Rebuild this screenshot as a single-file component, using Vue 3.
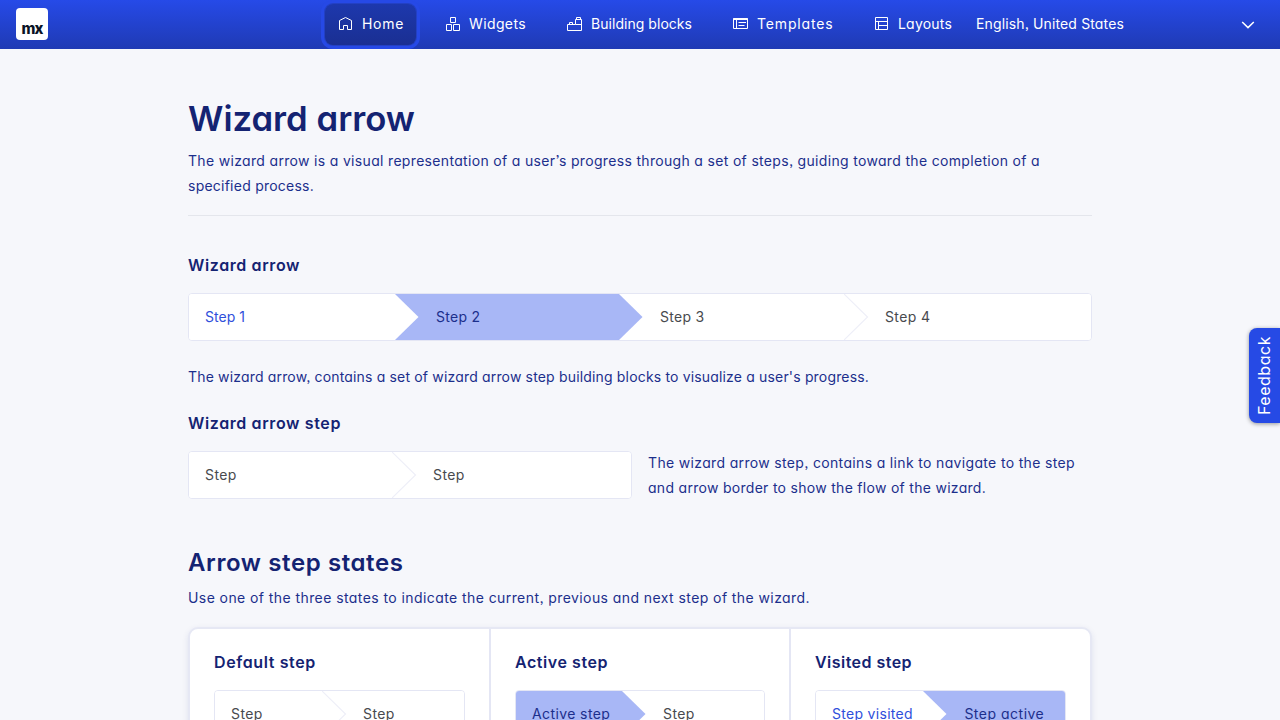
<script setup>
const nav = [
  { label: 'Home', icon: 'home', active: true },
  { label: 'Widgets', icon: 'widgets' },
  { label: 'Building blocks', icon: 'blocks' },
  { label: 'Templates', icon: 'templates' },
  { label: 'Layouts', icon: 'layouts' }
]
const mainSteps = [
  { label: 'Step 1', state: 'visited', cls: 's1' },
  { label: 'Step 2', state: 'active', cls: 's2' },
  { label: 'Step 3', state: 'default', cls: 's3' },
  { label: 'Step 4', state: 'default', cls: 's4' }
]
const cards = [
  { title: 'Default step', cls: 'c-default', steps: [{ label: 'Step', state: 'default' }, { label: 'Step', state: 'default' }] },
  { title: 'Active step', cls: 'c-active', steps: [{ label: 'Active step', state: 'active' }, { label: 'Step', state: 'default' }] },
  { title: 'Visited step', cls: 'c-visited', steps: [{ label: 'Step visited', state: 'visited' }, { label: 'Step active', state: 'active' }] }
]
</script>

<template>
  <div class="page">
    <header class="topbar">
      <div class="logo"><span>mx</span></div>
      <nav class="menu">
        <a v-for="n in nav" :key="n.icon" class="item" :class="[n.icon, { current: n.active }]">
          <svg class="icon" width="16" height="16" viewBox="0 0 16 16" fill="none" stroke="currentColor">
            <path v-if="n.icon === 'home'" d="M2.500 4.500 8.500 1.500 14.500 4.500V13.500H10.500V9.500H6.500V13.500H2.500Z" />
            <path v-else-if="n.icon === 'widgets'" d="M5.500 1.500H10.500V6.500H5.500ZM1.500 8.500H6.500V14.500H1.500ZM8.500 8.500H14.500V14.500H8.500Z" />
            <path v-else-if="n.icon === 'blocks'" d="M1.500 8.500H9.500V3.500H15.500V14.500H1.500ZM9.500 8.500H15.500M3.500 8.500V6.500H6.500V8.500M10.500 3.500V1.500H14.500V3.500" />
            <g v-else-if="n.icon === 'templates'">
              <path d="M1.500 2.500H15.500V12.500H1.500ZM4.500 4V12.500M6.500 6.500H14M6.500 9.500H12.500" />
              <path d="M1.500 3H15.500" stroke-width="2" />
            </g>
            <path v-else d="M1.500 1.500H13.500V13.500H1.500ZM1.500 5.500H13.500M4.500 5.500V13.500M4.500 9.500H13.500" />
          </svg>
          <span>{{ n.label }}</span>
        </a>
      </nav>
      <div class="lang">
        <span>English, United States</span>
        <svg width="14" height="8" viewBox="0 0 14 8" fill="none" stroke="#fff" stroke-width="1.500"><path d="M1.200 1 7 6.600 12.800 1" /></svg>
      </div>
    </header>

    <main class="content">
      <h1>Wizard arrow</h1>
      <p class="intro"><span class="i1">The wizard arrow is a visual representation of a user’s progress through a set of steps, guiding toward the completion of a</span><br><span class="i2">specified process.</span></p>

      <h4 class="h-arrow">Wizard arrow</h4>
      <div class="wizard main">
        <div v-for="(s, i) in mainSteps" :key="s.label" class="step" :class="[s.state, s.cls]">
          <span>{{ s.label }}</span>
          <svg v-if="i < 3" class="tip" width="25" height="46" viewBox="0 0 25 46"><path d="M0 0 23.500 23 0 46" /></svg>
        </div>
      </div>
      <p class="note">The wizard arrow, contains a set of wizard arrow step building blocks to visualize a user's progress.</p>

      <h4 class="h-step">Wizard arrow step</h4>
      <div class="split">
        <div class="wizard pair">
          <div v-for="i in 2" :key="i" class="step default">
            <span>Step</span>
            <svg v-if="i === 1" class="tip" width="25" height="46" viewBox="0 0 25 46"><path d="M0 0 23.500 23 0 46" /></svg>
          </div>
        </div>
        <p class="desc"><span class="d1">The wizard arrow step, contains a link to navigate to the step</span><br><span class="d2">and arrow border to show the flow of the wizard.</span></p>
      </div>

      <h2>Arrow step states</h2>
      <p class="lead">Use one of the three states to indicate the current, previous and next step of the wizard.</p>

      <section class="cards">
        <div v-for="c in cards" :key="c.title" class="card" :class="c.cls">
          <h4>{{ c.title }}</h4>
          <div class="wizard small">
            <div v-for="(s, i) in c.steps" :key="i" class="step" :class="s.state">
              <span>{{ s.label }}</span>
              <svg v-if="i === 0" class="tip" width="25" height="46" viewBox="0 0 25 46"><path d="M0 0 23.500 23 0 46" /></svg>
            </div>
          </div>
        </div>
      </section>
    </main>

    <button class="feedback"><span>Feedback</span></button>
  </div>
</template>

<style>
body { background: #f6f7fb; overflow: hidden; }
</style>
<style scoped>
.page { position: relative; width: 1280px; height: 720px; overflow: hidden; background: #f6f7fb; font-family: Inter, "Noto Sans", sans-serif; font-feature-settings: "cv11", "ss03"; font-size: 14px; color: #1c2f8c; white-space: nowrap; }
* { box-sizing: border-box; }
h1, h2, h4, p { margin: 0; }
h1, h2, h4 { color: #142372; font-weight: 600; }

.topbar { height: 49px; display: flex; align-items: center; background: linear-gradient(#264ae8, #1f3ab4); color: #fff; }
.logo { width: 32px; height: 32px; margin: 0 0 1px 16px; border-radius: 4px; background: #fff; color: #0a1325; display: flex; justify-content: center; }
.logo span { font-size: 15px; line-height: 16px; font-weight: 800; letter-spacing: -1px; margin-top: 13px; }
.menu { display: flex; gap: 16px; margin-left: 277px; }
.item { height: 41px; display: flex; align-items: center; gap: 9px; padding-left: 12px; padding-bottom: 2px; border-radius: 8px; line-height: 20px; }
.icon { flex: none; }
.home { width: 91px; letter-spacing: .69px; }
.widgets { width: 106px; letter-spacing: .38px; padding-left: 13px; }
.widgets .icon { margin-right: -1px; }
.blocks { width: 150px; letter-spacing: .04px; }
.templates { width: 126px; letter-spacing: .84px; }
.layouts { width: 98px; letter-spacing: .2px; }
.layouts .icon { margin-right: -1px; }
.current { background: linear-gradient(#1d38ad, #1a2f92); box-shadow: 0 0 0 1px #2340c4, 0 0 0 4px #2649e6; }
.lang { flex: 1; display: flex; align-items: center; justify-content: space-between; margin-left: 16px; padding-right: 25px; letter-spacing: .14px; }
.lang span { padding-bottom: 2px; }

.content { width: 904px; margin: 0 auto; }
h1 { font-size: 34.700px; line-height: 44px; margin-top: 47px; }
.intro { margin-top: 8px; line-height: 25px; height: 68px; border-bottom: 1px solid #e4e6ec; }
.i1 { letter-spacing: .325px; }
.i2 { letter-spacing: .237px; }
h4 { font-size: 16px; line-height: 20px; letter-spacing: .62px; }
.h-arrow { margin-top: 39px; }
.wizard { display: flex; height: 48px; border: 1px solid #e4e6f4; border-radius: 4px; background: #fff; }
.main { margin-top: 18px; }
.step { position: relative; flex: none; display: flex; align-items: center; padding-left: 41px; padding-bottom: 2px; color: #484a4e; letter-spacing: .4px; background: #fff; }
.step:first-child { padding-left: 16px; border-radius: 3px 0 0 3px; }
.step:last-child { flex: 1; border-radius: 0 3px 3px 0; }
.step.active { background: #a8b7f6; color: #1c2f8c; }
.step.visited { color: #2f4fdb; }
.tip { position: absolute; left: 100%; top: 0; z-index: 1; fill: #fff; stroke: #eeeff8; stroke-width: 1.2; overflow: hidden; }
.active .tip { fill: #a8b7f6; stroke: none; }
.visited .tip { stroke: none; }
.s1 { width: 206.400px; letter-spacing: .03px; }
.s2 { width: 224px; padding-left: 40.600px; letter-spacing: .3px; }
.s3 { width: 224.600px; padding-left: 40.600px; letter-spacing: .3px; }
.note { margin-top: 23px; line-height: 25px; letter-spacing: .167px; }
.h-step { margin-top: 24px; }
.split { display: flex; gap: 16px; margin-top: 18px; height: 50px; }
.pair { width: 444px; }
.pair .step:first-child { width: 203px; }
.desc { line-height: 25px; margin-top: -1px; }
.d1 { letter-spacing: .341px; }
.d2 { letter-spacing: .291px; }
h2 { font-size: 24px; line-height: 32px; margin-top: 46px; letter-spacing: .6px; }
.lead { margin-top: 6px; line-height: 25px; letter-spacing: .421px; }
.cards { display: flex; height: 150px; margin-top: 17px; border: 2px solid #e6e8f4; border-radius: 10px; background: #fff; box-shadow: 0 2px 6px rgba(20, 35, 114, .1); }
.card { flex: none; width: 301px; padding: 23px 24px; border-right: 2px solid #e4e6f4; }
.c-active { width: 300px; }
.card:last-child { width: 299px; border-right: 0; }
.c-active h4 { letter-spacing: .557px; }
.c-visited h4 { letter-spacing: .458px; }
.small { margin-top: 18px; }
.c-default .small { width: 251px; }
.c-active .small { width: 250px; }
.c-visited .small { width: 251px; }
.small .step:first-child { width: 107px; }
.c-active .small .step:first-child { width: 106px; }
.c-visited .small .step:first-child { width: 107.400px; letter-spacing: .3px; }
.c-visited .small .step:last-child { letter-spacing: .5px; }
.feedback { position: absolute; right: 0; top: 328px; width: 31px; height: 95px; padding: 0 2px 0 0; border: 0; border-radius: 8px 0 0 8px; background: #264ae5; color: #fff; display: flex; align-items: center; justify-content: center; box-shadow: 0 1px 4px rgba(0, 0, 0, .4); font: 400 16px Inter, sans-serif; font-feature-settings: "cv11"; letter-spacing: .53px; }
.feedback span { writing-mode: vertical-rl; transform: rotate(180deg); }
</style>
